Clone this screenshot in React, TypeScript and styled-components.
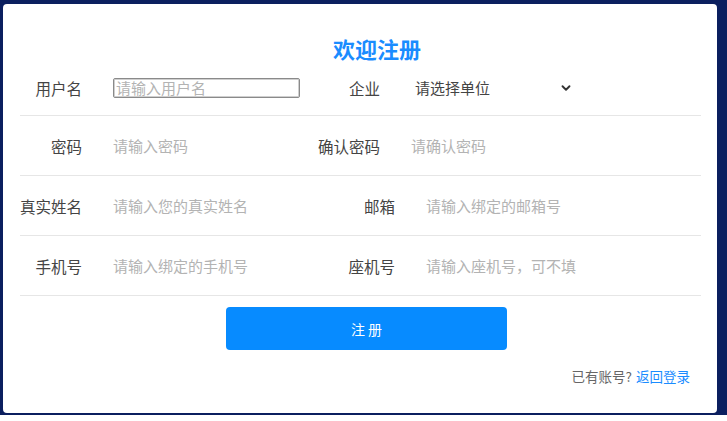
import React from "react";
import styled, { createGlobalStyle } from "styled-components";
import { ChevronDown } from "lucide-react";

const GlobalStyle = createGlobalStyle`
  html, body {
    margin: 0;
    padding: 0;
    background: #fff;
  }
  body {
    font-family: "Noto Sans CJK SC", "Liberation Sans", sans-serif;
  }
`;

const Frame = styled.div`
  height: 415px;
  box-sizing: border-box;
  padding: 4px 10px 2px 3px;
  background: #0b1f5f;
`;

const Card = styled.div`
  height: 100%;
  box-sizing: border-box;
  padding: 32px 16px 0 17px;
  background: #fff;
  border-radius: 4px;
`;

const Title = styled.h1`
  margin: 0;
  padding-left: 33px;
  text-align: center;
  font-size: 22px;
  line-height: 24px;
  font-weight: 700;
  color: #1a8cff;
`;

const Row = styled.div<{ $h: number }>`
  display: flex;
  align-items: center;
  height: ${(p) => p.$h}px;
  box-sizing: border-box;
  border-bottom: 1px solid #e6e6e6;
`;

const Label = styled.label<{ $w: number }>`
  flex: none;
  width: ${(p) => p.$w}px;
  margin-right: 31px;
  text-align: right;
  white-space: nowrap;
  font-size: 15.5px;
  color: #444;
`;

const Input = styled.input<{ $w: number; $boxed?: boolean }>`
  flex: none;
  width: ${(p) => p.$w}px;
  height: 20px;
  box-sizing: border-box;
  margin: 0;
  padding: 0 ${(p) => (p.$boxed ? 2 : 0)}px;
  border: ${(p) => (p.$boxed ? "1px solid #8a8a8a" : "none")};
  box-shadow: ${(p) => (p.$boxed ? "inset 0 0 0 1px #cfcfcf" : "none")};
  border-radius: 2px;
  outline: none;
  background: transparent;
  font-family: inherit;
  font-size: 15px;
  color: #333;
  &::placeholder {
    color: #b3b3b3;
  }
`;

const Select = styled.div`
  display: flex;
  align-items: center;
  justify-content: space-between;
  width: 166px;
  box-sizing: border-box;
  padding: 0 4px 0 4px;
  font-size: 15px;
  color: #444;
  cursor: pointer;
`;

const Submit = styled.button`
  display: block;
  width: 281px;
  height: 43px;
  margin: 11px 0 0 206px;
  border: none;
  border-radius: 4px;
  background: #078bff;
  color: #fff;
  font-family: inherit;
  font-size: 14px;
  cursor: pointer;
`;

const Footer = styled.div`
  margin-top: 16px;
  padding-right: 11px;
  text-align: right;
  font-size: 13.5px;
  line-height: 20px;
  color: #666;
`;

const Link = styled.a`
  margin-left: 4px;
  color: #1a8cff;
  text-decoration: none;
  cursor: pointer;
`;

const App: React.FC = () => {
  return (
    <>
      <GlobalStyle />
      <Frame>
        <Card>
          <Title>欢迎注册</Title>
          <Row $h={56}>
            <Label $w={62}>用户名</Label>
            <Input $w={187} $boxed placeholder="请输入用户名" />
            <Label $w={80}>企业</Label>
            <Select>
              <span>请选择单位</span>
              <ChevronDown size={14} strokeWidth={3.2} color="#333" />
            </Select>
          </Row>
          <Row $h={60}>
            <Label $w={62}>密码</Label>
            <Input $w={187} type="password" placeholder="请输入密码" />
            <Label $w={80}>确认密码</Label>
            <Input $w={220} type="password" placeholder="请确认密码" />
          </Row>
          <Row $h={60}>
            <Label $w={62}>真实姓名</Label>
            <Input $w={187} placeholder="请输入您的真实姓名" />
            <Label $w={95}>邮箱</Label>
            <Input $w={220} placeholder="请输入绑定的邮箱号" />
          </Row>
          <Row $h={60}>
            <Label $w={62}>手机号</Label>
            <Input $w={187} placeholder="请输入绑定的手机号" />
            <Label $w={95}>座机号</Label>
            <Input $w={220} placeholder="请输入座机号，可不填" />
          </Row>
          <Submit>注 册</Submit>
          <Footer>
            已有账号?
            <Link>返回登录</Link>
          </Footer>
        </Card>
      </Frame>
    </>
  );
};

export default App;
